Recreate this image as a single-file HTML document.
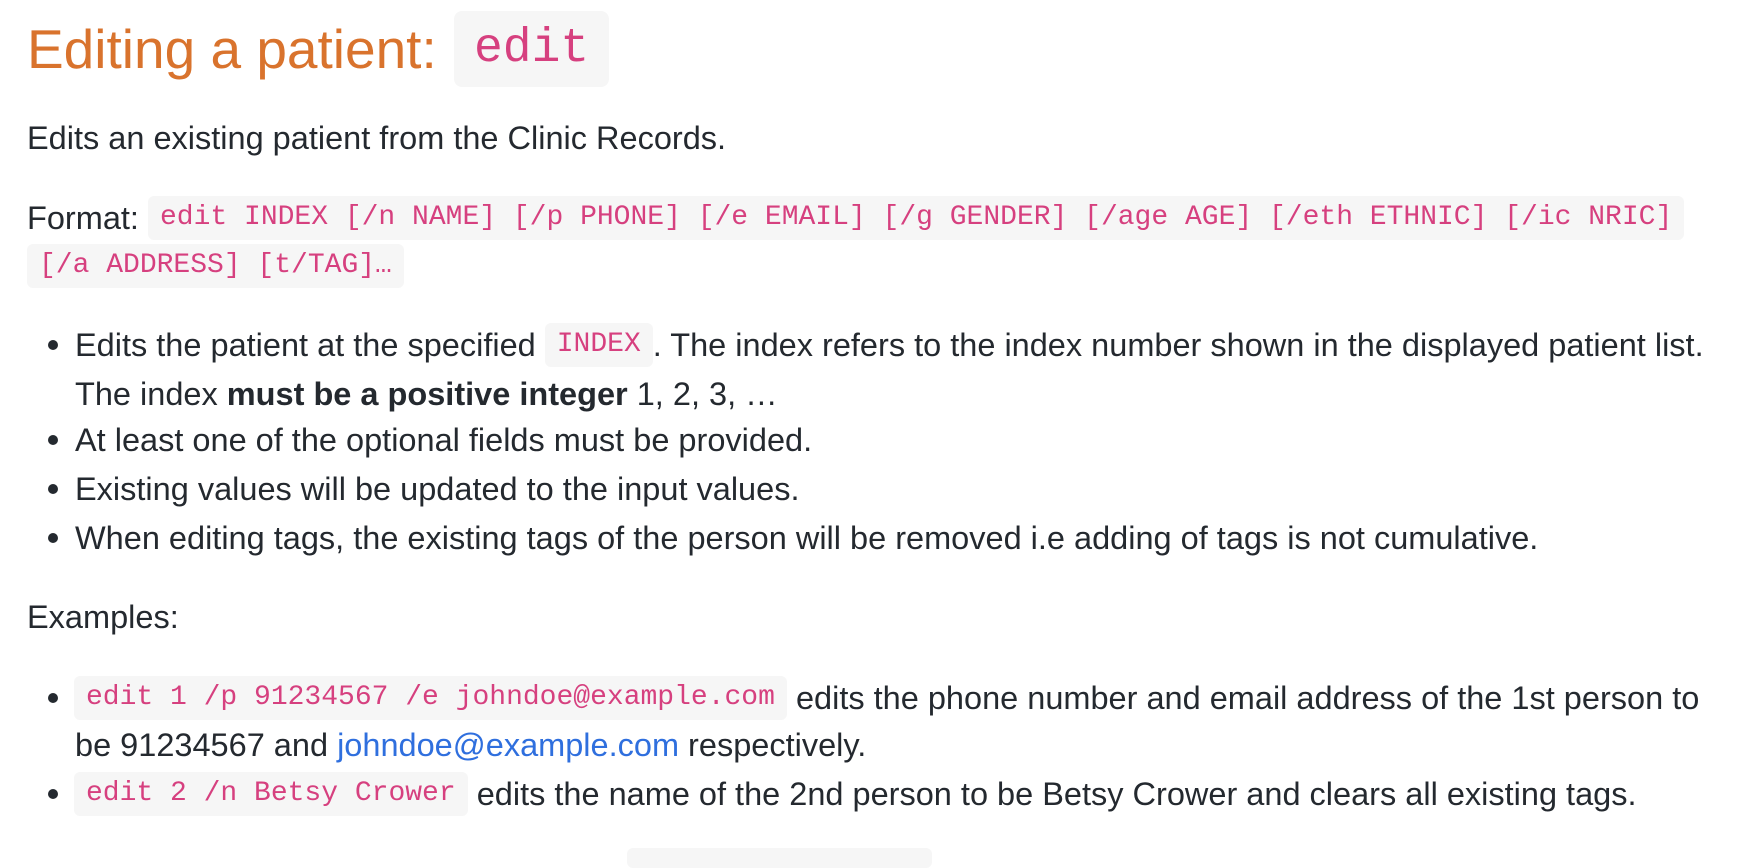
<!DOCTYPE html>
<html><head><meta charset="utf-8"><style>
body{margin:0;width:1754px;height:856px;background:#fff;overflow:hidden;position:relative;font-family:"Liberation Sans",sans-serif;color:#24292f;}
.l{position:absolute;left:27px;height:48px;line-height:48px;font-size:32.5px;white-space:nowrap;}
.ind{left:75px;}
code{font-family:"Liberation Mono",monospace;font-size:28px;color:#d6407f;background:#f6f6f6;border-radius:6px;display:inline-block;height:44px;line-height:44px;padding:0 12px;vertical-align:middle;position:relative;top:-2px;}
.b{position:absolute;left:48px;width:10px;height:10px;border-radius:50%;background:#24292f;}
a{color:#2f6fde;text-decoration:none;}
</style></head><body>
<div style="position:absolute;left:27px;top:11px;height:76px;line-height:76px;font-size:55px;color:#d9732d;white-space:nowrap;">Editing a patient:<span style="position:absolute;left:427px;top:0;height:76px;padding:0 20px;background:#f6f6f6;border-radius:8px;font-family:'Liberation Mono',monospace;font-size:48px;color:#d6407f;">edit</span></div>

<div class="l" style="top:114px">Edits an existing patient from the Clinic Records.</div>

<div class="l" style="top:194px">Format: <code>edit INDEX [/n NAME] [/p PHONE] [/e EMAIL] [/g GENDER] [/age AGE] [/eth ETHNIC] [/ic NRIC]</code></div>
<code style="position:absolute;left:27px;top:244px;">[/a ADDRESS] [t/TAG]…</code>

<div class="b" style="top:340px"></div>
<div class="l ind" style="top:321px">Edits the patient at the specified <code>INDEX</code>. The index refers to the index number shown in the displayed patient list.</div>
<div class="l ind" style="top:370px">The index <b>must be a positive integer</b> 1, 2, 3, …</div>
<div class="b" style="top:435px"></div>
<div class="l ind" style="top:416px">At least one of the optional fields must be provided.</div>
<div class="b" style="top:484px"></div>
<div class="l ind" style="top:465px">Existing values will be updated to the input values.</div>
<div class="b" style="top:533px"></div>
<div class="l ind" style="top:514px">When editing tags, the existing tags of the person will be removed i.e adding of tags is not cumulative.</div>

<div class="l" style="top:593px">Examples:</div>

<div class="b" style="top:693px"></div>
<div class="l" style="top:674px;left:74px"><code>edit 1 /p 91234567 /e johndoe@example.com</code> edits the phone number and email address of the 1st person to</div>
<div class="l ind" style="top:721px">be 91234567 and <a>johndoe@example.com</a> respectively.</div>
<div class="b" style="top:789px"></div>
<div class="l" style="top:770px;left:74px"><code>edit 2 /n Betsy Crower</code> edits the name of the 2nd person to be Betsy Crower and clears all existing tags.</div>

<div style="position:absolute;left:627px;top:848px;width:305px;height:20px;background:#f6f6f6;border-radius:6px;"></div>
</body></html>
